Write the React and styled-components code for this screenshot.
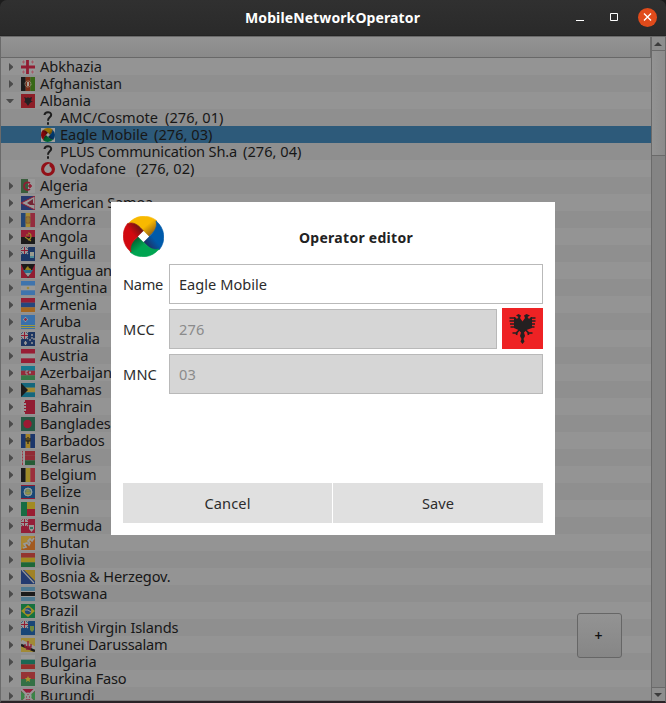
import React, { useLayoutEffect, useRef, useState } from "react";
import styled, { createGlobalStyle } from "styled-components";

const GlobalStyle = createGlobalStyle`
  * { box-sizing: border-box; }
  body { margin: 0; background: #222; overflow: hidden; }
  button, input { font: inherit; }
`;

const Window = styled.div`
  position: relative;
  width: 666px;
  height: 703px;
  display: flex;
  flex-direction: column;
  overflow: hidden;
  background: #1c1c1c;
  color: #171717;
  font: 14.6px/17px "Noto Sans", sans-serif;
`;

const TitleBar = styled.header`
  height: 36px;
  flex: none;
  display: grid;
  grid-template-columns: 1fr auto 1fr;
  align-items: center;
  background: linear-gradient(#303030, #2a2a2a);
  border-radius: 7px 7px 0 0;
  border-bottom: 1px solid #242424;
  color: #fff;
`;

const Title = styled.h1`
  grid-column: 2;
  margin: 0 1px 0 0;
  font-size: 14px;
  line-height: 20px;
  font-weight: 700;
`;

const Controls = styled.div`
  display: flex;
  justify-content: flex-end;
  padding-right: 9px;
  gap: 15px;
`;

const ControlButton = styled.button`
  width: 19px;
  height: 19px;
  padding: 0;
  border: 0;
  border-radius: 50%;
  background: ${(p) => (p.$close ? "#e04b1b" : "transparent")};
  display: flex;
`;

const Body = styled.main`
  flex: 1;
  min-height: 0;
  display: flex;
  border: 1px solid #6a6a6a;
  border-bottom: 2px solid #2a2327;
  background: #919191;
`;

const Tree = styled.div`
  flex: 1;
  min-width: 0;
  overflow: hidden;
  border-bottom: 1px solid #777;
`;

const TreeHeader = styled.div`
  height: 21px;
  background: linear-gradient(#939393, #898989);
  border-bottom: 1px solid #686868;
  border-right: 1px solid #6c6c6c;
`;

const Row = styled.div`
  height: 17px;
  display: flex;
  align-items: center;
  padding-left: ${(p) => (p.$child ? 40 : 5)}px;
  background: ${(p) => (p.$selected ? "#2d5a7a" : "#949494")};
  &:nth-child(odd) {
    background: ${(p) => (p.$selected ? "#2d5a7a" : "#8f8f8f")};
  }
`;

const RowArrow = styled.svg`
  width: 8px;
  height: 8px;
  margin-right: 6px;
  flex: none;
  fill: #4b4b4b;
`;

const Icon = styled.svg`
  width: 14px;
  height: 14px;
  flex: none;
  margin: 1px 5px 0 ${(p) => (p.$child ? 0 : 1)}px;
`;

const Text = styled.span`
  flex: none;
  white-space: nowrap;
  margin-left: ${(p) => p.$gap || 0}px;
`;

const ScrollBar = styled.div`
  width: 14px;
  flex: none;
  display: flex;
  flex-direction: column;
  background: #848484;
  border-left: 1px solid #6a6a6a;
`;

const ScrollButton = styled.div`
  height: 14px;
  display: flex;
  align-items: center;
  justify-content: center;
  background: #8e8e8e;
  border-${(p) => (p.$down ? "top" : "bottom")}: 1px solid #6a6a6a;
  svg { fill: #3c3c3c; margin-right: 1px; }
`;

const Thumb = styled.div`
  height: 105px;
  background: linear-gradient(90deg, #949494, #8b8b8b);
  border-bottom: 1px solid #6a6a6a;
`;

const ScrollTrack = styled.div`
  flex: 1;
`;

const AddButton = styled.button`
  position: absolute;
  right: 44px;
  bottom: 45px;
  width: 45px;
  height: 45px;
  padding: 0 2px 0 0;
  border: 1px solid #666;
  border-radius: 3px;
  background: linear-gradient(#939393, #868686);
  color: #111;
  font-size: 14px;
  font-weight: 600;
`;

const Dialog = styled.section`
  position: absolute;
  left: 111px;
  top: 202px;
  width: 444px;
  height: 333px;
  padding: 14px 12px 12px;
  display: flex;
  flex-direction: column;
  background: #fff;
  color: #2c2c2c;
`;

const DialogHeader = styled.div`
  height: 41px;
  display: flex;
  margin-bottom: 7px;
`;

const DialogTitle = styled.h2`
  flex: 1;
  margin: 0 0 0 5px;
  display: flex;
  align-items: center;
  justify-content: center;
  padding-top: 1px;
  font-size: 14px;
  font-weight: 700;
  color: #222;
`;

const Field = styled.label`
  height: 40px;
  margin-bottom: 5px;
  display: flex;
  align-items: center;
`;

const FieldLabel = styled.span`
  width: 46px;
  flex: none;
`;

const FieldValue = styled.div`
  flex: 1;
  height: 40px;
  display: flex;
  align-items: center;
  padding: 1px 9px 0;
  border: 1px solid #b9b9b9;
  background: ${(p) => (p.$disabled ? "#d6d6d6" : "#fff")};
  color: ${(p) => (p.$disabled ? "#8b8b8b" : "#2c2c2c")};
`;

const CountryFlag = styled.svg`
  width: 41px;
  height: 41px;
  margin: -1px 0 0 5px;
  flex: none;
`;

const Actions = styled.div`
  margin-top: auto;
  display: grid;
  grid-template-columns: 209px 210px;
  gap: 1px;
`;

const ActionButton = styled.button`
  height: 40px;
  padding: 1px 0 0;
  border: 0;
  background: #e0e0e0;
  color: #2c2c2c;
`;

/* Spreads the letters so that the text takes the given width. */
function Fit({ children, width, gap }) {
  const ref = useRef(null);
  const [spacing, setSpacing] = useState(0);
  useLayoutEffect(() => {
    const natural = ref.current.getBoundingClientRect().width;
    setSpacing((width - natural) / children.length);
  }, [children, width]);
  return (
    <Text ref={ref} $gap={gap} style={{ letterSpacing: `${spacing}px` }}>
      {children}
    </Text>
  );
}

const W = "#989898";
const R = "#911c32";
const K = "#1b1b1b";
const Y = "#94801a";

const rows = (...c) =>
  c.map((f, i) => <rect key={i} y={(14 * i) / c.length} width="14" height={14 / c.length + 0.1} fill={f} />);
const cols = (...c) =>
  c.map((f, i) => <rect key={i} x={(14 * i) / c.length} width={14 / c.length + 0.1} height="14" fill={f} />);
const fill = (f) => <rect width="14" height="14" fill={f} />;
const P = ({ d, f, s, w = 1 }) => <path d={d} fill={f || "none"} stroke={s} strokeWidth={w} />;

const UnionJack = () => (
  <>
    <P d="M0 0L7 7M7 0L0 7" s={W} w={1.2} />
    <P d="M3.5 0V7M0 3.5H7" s={W} w={3} />
    <P d="M3.5 0V7M0 3.5H7" s={R} w={1} />
  </>
);

const logoArms = [
  ["yellow", "#f8b900", "#8e5b12", 0],
  ["blue", "#005aaa", "#242857", 90],
  ["green", "#00a451", "#06572c", 180],
  ["red", "#d1090f", "#5e1514", 270],
];

const EagleLogo = ({ id }) => (
  <>
    <defs>
      {logoArms.map(([name, light, dark]) => (
        <linearGradient key={name} id={`${id}-${name}`} gradientUnits="userSpaceOnUse" x1="20" y1="4" x2="31" y2="18">
          <stop offset=".35" stopColor={light} />
          <stop offset="1" stopColor={dark} />
        </linearGradient>
      ))}
    </defs>
    {logoArms.map(([name, , , angle]) => (
      <path
        key={name}
        transform={`rotate(${angle} 20.5 20.5)`}
        d="M5 8A20.3 20.3 0 0 1 33.5 4.5C36 12 30 17 26 20.5L20.5 15C17 11 12 6 5 8Z"
        fill={`url(#${id}-${name})`}
        stroke={`url(#${id}-${name})`}
        strokeWidth=".6"
      />
    ))}
    <path d="M20.5 15L26 20.5L20.5 26L15 20.5Z" fill="#fff" />
  </>
);

const EagleShape = ({ color }) => (
  <g fill={color} stroke={color}>
    <path stroke="none" d="M14 7.5L16.5 6L19 7.5L18 10L20.5 13.5L23 10L22 7.5L24.5 6L28 7.5L25.5 9L27 11L29 9H30V20L24.5 22L22 24.5L23 28L21.5 31L22.5 33.5L20.5 36L18.5 33.5L19.5 31L18 28L19 24.5L16.5 22L12 20V9H13L15 11L16.5 9Z" />
    <path d="M7.5 10H13M7.5 13H13M8 16H13M8.5 19H14M33.5 10H29M33.5 13H29M33 16H29M32.5 19H28" strokeWidth="1.7" />
    <path d="M18 21L14.5 25H10.5M23 21L26.5 25H30.5M15 24L14.5 27M26 24L26.5 27" fill="none" strokeWidth="1.7" />
  </g>
);

const flags = {
  Abkhazia: <>{fill(W)}<P d="M6.5 0V14M0 7H14" s={R} w={2.8} /><P d="M1 2H4M10 2H13M1 12H4M10 12H13M2.5 .5V3.5M11.5 .5V3.5M2.5 10.5V13.5M11.5 10.5V13.5" s="#a35b67" /></>,
  Afghanistan: <>{cols(K, "#7c2c16", "#376816")}<circle cx="7" cy="7" r="3" fill="none" stroke="#aaa18c" strokeDasharray="1 .5" /><P d="M6 5H8V9H6Z" f="#a9a096" /></>,
  Albania: <>{fill("#8d1e27")}<P d="M4 5L3 3L6 4L7 3L8 4L11 3L10 7L12 7L9 9L7 12L5 9L3 8L4 7Z" f="#242124" /></>,
  Algeria: <>{cols("#3a5d3c", W)}<P d="M9 4C5 2 3 5 3 7C3 11 7 12 9 10M7 7H11M9 5V9" s={R} w={1.6} /></>,
  "American Samoa": <>{fill("#26386e")}<P d="M14 0V14L0 7Z" f={W} s={R} /><P d="M6 7L12 3V7L14 9L9 9Z" f="#742434" /></>,
  Andorra: <>{cols("#244676", "#a58c35", "#942c3e")}<P d="M5 4H9V10H5Z" s="#7e5531" /><P d="M7 5V9" s="#806633" /></>,
  Angola: <>{rows("#981d36", K)}<P d="M7 3C11 3 11 9 7 10M4 7L10 11M5 5H8" s="#9b8527" w={1.2} /></>,
  Anguilla: <>{fill("#1c3765")}<UnionJack /><P d="M9 5H13V9L11 11L9 9Z" f="#9b9c90" /><P d="M9 10H13" s="#4d8b98" w={2} /></>,
  "Antigua and Barbuda": <>{fill(R)}<P d="M0 0H14L7 14Z" f={K} /><P d="M2 6H12L10 9H4Z" f="#2a708e" /><P d="M4 9H10L7 13Z" f={W} /><P d="M4 6L5 4L7 2L8 4L10 5V6Z" f={Y} /></>,
  Argentina: <>{rows("#3f74ad", W, "#3f74ad")}<circle cx="7" cy="7" r="1.3" fill="#a28a3a" /></>,
  Armenia: rows("#951d33", "#24467d", "#a46720"),
  Aruba: <>{fill("#3a70aa")}<P d="M0 10.5H14M0 12.5H14" s="#a0983f" /><P d="M4.5 2V7M2 4.5H7" s={W} w={1.5} /><P d="M4.5 3V6M3 4.5H6" s="#922a46" /></>,
  Australia: <>{fill("#1d3561")}<UnionJack /><P d="M3 11H6M4.5 9V13M10 3H12M11 5V7M10 11H12M9 7V9M13 6V8" s={W} w={1.3} /></>,
  Austria: rows("#981d35", W, "#981d35"),
  Azerbaijan: <>{rows("#16788e", "#942b3a", "#357747")}<P d="M7 5H5V8H7M9 5V8M8 6.5H10" s={W} /></>,
  Bahamas: <>{rows("#14677d", "#a18935", "#14677d")}<P d="M0 0L7 7L0 14Z" f={K} /></>,
  Bahrain: <>{fill(R)}<P d="M0 0H4V2H3V3H5V5H3V6H5V8H3V9H5V11H3V12H4V14H0Z" f={W} /></>,
  Bangladesh: <>{fill("#245843")}<circle cx="6.5" cy="7" r="4.2" fill="#9b1a33" /></>,
  Barbados: <>{cols("#1b366b", "#a28227", "#1b366b")}<P d="M5 4V7H9V4M7 3V10" s={K} w={1.1} /></>,
  Belarus: <>{rows("#912b35", "#912b35", "#255b36")}<P d="M0 0H4V14H0Z" f={W} /><P d="M1.5 0V14" s="#9c3845" strokeDasharray="1" /><P d="M1 2H3M1 5H3M1 8H3M1 11H3" s={W} /></>,
  Belgium: cols(K, "#a08c27", "#9b2f3b"),
  Belize: <>{fill("#194675")}<P d="M0 .5H14M0 13.5H14" s={R} /><circle cx="7" cy="7" r="4" fill={W} stroke="#8fa09c" /><circle cx="7" cy="7" r="3" fill="#537870" /><P d="M4 8H10M6 5H8V9H6Z" s="#a1963f" /></>,
  Benin: <>{fill("#176c43")}<P d="M6 0H14V7H6Z" f="#a28b22" /><P d="M6 7H14V14H6Z" f="#991d32" /></>,
  Bermuda: <>{fill("#941e38")}<UnionJack /><P d="M8 6H13V10L10.5 13L8 10Z" f={W} /><P d="M9 8H12V10H9Z" f="#37725e" /></>,
  Bhutan: <>{fill("#a25a21")}<P d="M0 14V0H14Z" f="#a98531" /><P d="M2 12L5 11L3 8L6 7L8 9L9 7L7 5L9 3L11 5L13 2" s={W} w={1.7} /></>,
  Bolivia: rows("#94352f", "#a08b20", "#1d6738"),
  "Bosnia & Herzegov.": <>{fill("#233b70")}<P d="M3 0H14V11Z" f="#a08226" /><P d="M1 0L13 13" s={W} w={1.2} /></>,
  Botswana: <>{fill("#4c7890")}<P d="M0 7H14" s={W} w={6} /><P d="M0 7H14" s={K} w={4} /></>,
  Brazil: <>{fill("#16713f")}<P d="M7 1L14 7L7 13L0 7Z" f="#a39122" /><circle cx="7" cy="7" r="3.2" fill="#234b76" /><P d="M4 6H7L10 8" s={W} /></>,
  "British Virgin Islands": <>{fill("#194677")}<UnionJack /><P d="M9 5H13V9L11 11L9 9Z" f="#6e863c" /></>,
  "Brunei Darussalam": <>{fill("#a18a36")}<P d="M0 4L14 11" s={W} w={5} /><P d="M0 7L14 13" s={K} w={2.5} /><P d="M7 3V10M4 6V9H10V6M5 11H10" s={R} w={1.3} /></>,
  Bulgaria: rows("#989898", "#1a6854", "#942e2b"),
  "Burkina Faso": <>{rows("#963335", "#347045")}<P d="M7 4L8 6H10L8.5 8L9 10L7 8.8L5 10L5.5 8L4 6H6Z" f="#a49231" /></>,
  Burundi: <>{fill("#951c38")}<P d="M0 2V12L6 7ZM14 2V12L8 7Z" f="#3a8446" /><P d="M0 0L14 14M14 0L0 14" s={W} w={2} /><circle cx="7" cy="7" r="3.6" fill={W} /><P d="M5 8H6M8 8H9M6.5 5.5H7.5" s={R} /></>,
};

const operatorIcons = {
  unknown: <P d="M3.5 4C3.8 .5 10 0 10.2 3.8C10.2 6.5 7 6.3 7 9.7M7 11.2V13.8" s="#1e1e1e" w={2} />,
  eagle: (
    <>
      {fill("#fff")}
      <g transform="scale(.341)"><EagleLogo id="row-logo" /></g>
      <rect width="14" height="14" fill="#000" opacity=".38" />
    </>
  ),
  vodafone: <><circle cx="7" cy="7" r="7" fill="#921018" /><P d="M8.5 1.5C5 2.5 3 5.5 3.2 8C4 12 10 12 10.8 8C10.8 5.5 9 5 8.5 4Z" f={W} /></>,
};

const tree = [
  ["Abkhazia", 62], ["Afghanistan", 82], ["Albania", 51],
  { name: "AMC/Cosmote", width: 98, code: "(276, 01)", gap: 6, icon: "unknown" },
  { name: "Eagle Mobile", width: 88, code: "(276, 03)", gap: 5, icon: "eagle", selected: true },
  { name: "PLUS Communication Sh.a", width: 177, code: "(276, 04)", gap: 5, icon: "unknown" },
  { name: "Vodafone", width: 66, code: "(276, 02)", gap: 9, icon: "vodafone" },
  ["Algeria", 48], ["American Samoa", 113], ["Andorra", 56], ["Angola", 48],
  ["Anguilla", 56], ["Antigua and Barbuda", 141], ["Argentina", 67.5], ["Armenia", 57],
  ["Aruba", 41], ["Australia", 60], ["Austria", 48.5], ["Azerbaijan", 72], ["Bahamas", 61.5],
  ["Bahrain", 52], ["Bangladesh", 79.5], ["Barbados", 64.5], ["Belarus", 51.5], ["Belgium", 56.5],
  ["Belize", 41.5], ["Benin", 39.5], ["Bermuda", 62], ["Bhutan", 49.5], ["Bolivia", 45.5],
  ["Bosnia & Herzegov.", 130.5], ["Botswana", 67.5], ["Brazil", 38.5],
  ["British Virgin Islands", 138.5], ["Brunei Darussalam", 127.5], ["Bulgaria", 56.5],
  ["Burkina Faso", 86.5], ["Burundi", 54.5],
];

function OperatorRow({ item }) {
  return (
    <Row $child $selected={item.selected}>
      <Icon $child viewBox="0 0 14 14">{operatorIcons[item.icon]}</Icon>
      <Fit width={item.width}>{item.name}</Fit>
      <Fit width={58.5} gap={item.gap + 1}>{item.code}</Fit>
    </Row>
  );
}

function CountryRow({ name, width }) {
  return (
    <Row>
      <RowArrow viewBox="0 0 8 8">
        <path d={name === "Albania" ? "M0 2H8L4.5 6H3.5Z" : "M3 0L7 3.5V4.5L3 8Z"} />
      </RowArrow>
      <Icon viewBox="0 0 14 14">{flags[name]}</Icon>
      <Fit width={width}>{name}</Fit>
    </Row>
  );
}

export default function App() {
  return (
    <>
      <GlobalStyle />
      <Window>
        <TitleBar>
          <Title><Fit width={175}>MobileNetworkOperator</Fit></Title>
          <Controls>
            <ControlButton aria-label="Minimize">
              <svg width="19" height="19"><path d="M6 12.5H14" stroke="#fff" /></svg>
            </ControlButton>
            <ControlButton aria-label="Maximize">
              <svg width="19" height="19"><path d="M6.5 5.5H13.5V12.5H6.5Z" fill="none" stroke="#fff" /></svg>
            </ControlButton>
            <ControlButton $close aria-label="Close">
              <svg width="19" height="19"><path d="M6 5.5L13 12.5M13 5.5L6 12.5" stroke="#fff" strokeWidth="1.4" /></svg>
            </ControlButton>
          </Controls>
        </TitleBar>
        <Body>
          <Tree>
            <TreeHeader />
            {tree.map((item) =>
              Array.isArray(item)
                ? <CountryRow key={item[0]} name={item[0]} width={item[1]} />
                : <OperatorRow key={item.name} item={item} />
            )}
          </Tree>
          <ScrollBar>
            <ScrollButton><svg width="8" height="4"><path d="M0 4L4 0L8 4Z" /></svg></ScrollButton>
            <Thumb />
            <ScrollTrack />
            <ScrollButton $down><svg width="8" height="4"><path d="M0 0L4 4L8 0Z" /></svg></ScrollButton>
          </ScrollBar>
        </Body>
        <AddButton>+</AddButton>
        <Dialog>
          <DialogHeader>
            <svg width="41" height="41" viewBox="0 0 41 41"><EagleLogo id="dialog-logo" /></svg>
            <DialogTitle><Fit width={114}>Operator editor</Fit></DialogTitle>
          </DialogHeader>
          <Field>
            <FieldLabel><Fit width={40}>Name</Fit></FieldLabel>
            <FieldValue><Fit width={88}>Eagle Mobile</Fit></FieldValue>
          </Field>
          <Field>
            <FieldLabel><Fit width={32}>MCC</Fit></FieldLabel>
            <FieldValue $disabled><Fit width={25.5}>276</Fit></FieldValue>
            <CountryFlag viewBox="0 0 41 41">
              <rect width="41" height="41" fill="#ee2224" />
              <EagleShape color="#242021" />
            </CountryFlag>
          </Field>
          <Field>
            <FieldLabel><Fit width={34}>MNC</Fit></FieldLabel>
            <FieldValue $disabled><Fit width={17}>03</Fit></FieldValue>
          </Field>
          <Actions>
            <ActionButton><Fit width={46}>Cancel</Fit></ActionButton>
            <ActionButton><Fit width={32}>Save</Fit></ActionButton>
          </Actions>
        </Dialog>
      </Window>
    </>
  );
}
